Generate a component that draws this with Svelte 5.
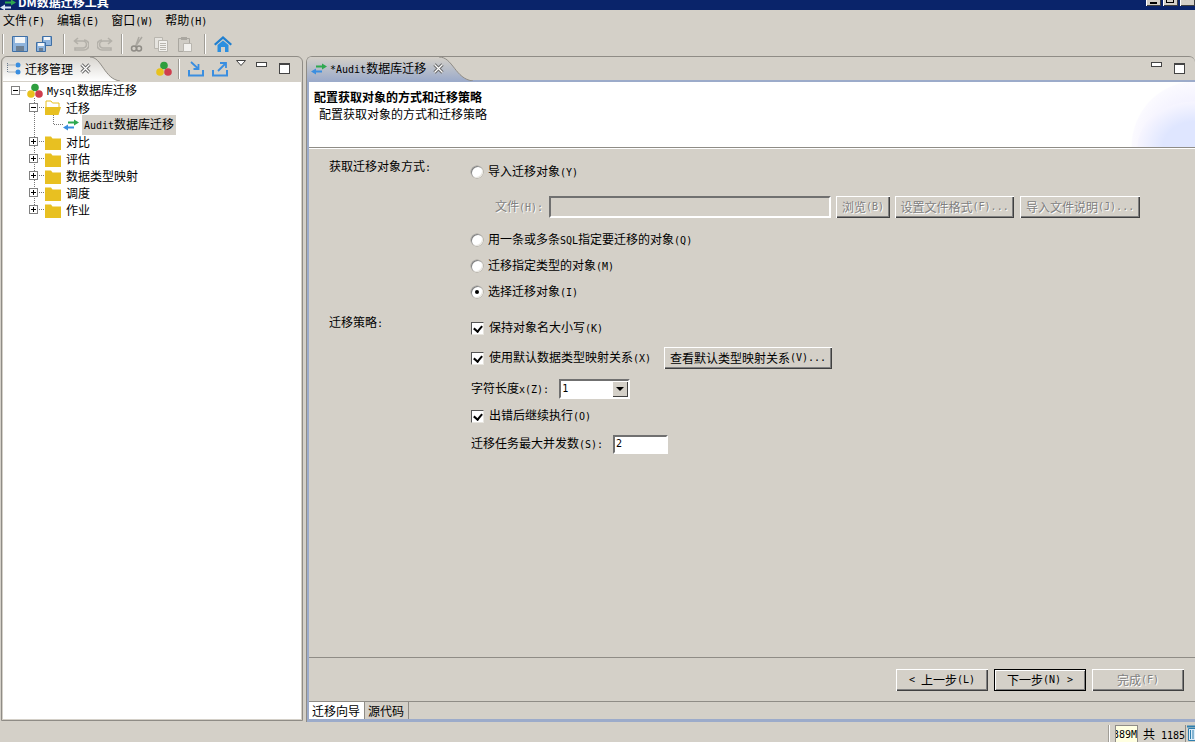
<script>
  const folders = ['对比', '评估', '数据类型映射', '调度', '作业'];
</script>

{#snippet tri()}
  <svg class="ic" width="16" height="16" viewBox="0 0 16 16"><circle cx="8" cy="4.5" r="3.8" fill="#2e9e3e"/><circle cx="4" cy="11" r="3.8" fill="#e8c21e"/><circle cx="12" cy="11" r="3.8" fill="#cf3d4d"/></svg>
{/snippet}
{#snippet arrows()}
  <svg class="ic" width="16" height="16" viewBox="0 0 16 16"><path d="M5 4.500h6V2.500l5 3-5 3V6.500H5z" fill="#2fa84f"/><path d="M11 9.500H5V7.500l-5 3 5 3v-2h6z" fill="#3a8ee0"/></svg>
{/snippet}
{#snippet folder()}
  <svg class="ic" width="16" height="16" viewBox="0 0 16 16"><path d="M0 2.500h6l1.500 2H16V16H0z" fill="#e8c021"/></svg>
{/snippet}
{#snippet folderOpen()}
  <svg class="ic" width="16" height="16" viewBox="0 0 16 16"><path d="M1 1h5l1.500 2H14v5H1z" fill="#fff" stroke="#e8c021"/><path d="M0 7h16l-2.500 8H0z" fill="#e8c021"/></svg>
{/snippet}
{#snippet paneControls()}
  <svg class="pc-min" width="11" height="6" viewBox="0 0 11 6"><rect x=".5" y=".5" width="10" height="4" fill="#fff" stroke="#444"/></svg>
  <svg class="pc-max" width="11" height="11" viewBox="0 0 11 11"><rect x=".5" y=".5" width="10" height="10" fill="#fff" stroke="#444"/><rect x="0" y="0" width="11" height="2" fill="#444"/></svg>
{/snippet}
{#snippet close()}
  <svg class="x" width="11" height="11" viewBox="0 0 11 11"><path d="M1.500 1.500l8 8M9.500 1.500l-8 8" stroke="#6a6a6a" stroke-width="3.200" fill="none"/><path d="M1.500 1.500l8 8M9.500 1.500l-8 8" stroke="#fff" stroke-width="1.200" fill="none"/></svg>
{/snippet}

<div class="app">
  <header class="title">
    <svg class="title-ic" width="16" height="16" viewBox="0 0 16 16"><path d="M5 4.500h6V2.500l5 3-5 3V6.500H5z" fill="#2fa84f"/><path d="M11 9.500H5V7.500l-5 3 5 3v-2h6z" fill="#d9e4f5"/></svg>
    <span class="title-text">DM数据迁移工具</span>
    <div class="win">
      <span class="wb"><b class="wmin"></b></span><span class="wb"><b class="wmax"></b></span><span class="wb wx">✕</span>
    </div>
  </header>

  <nav class="menu">
    <span>文件<i>(F)</i></span><span>编辑<i>(E)</i></span><span>窗口<i>(W)</i></span><span>帮助<i>(H)</i></span>
  </nav>

  <div class="toolbar">
    <span class="sep first"></span>
    <svg width="16" height="16" viewBox="0 0 16 16"><path d="M.5.500h15v15H.5z" fill="#8fb4dd" stroke="#3f6fa5"/><rect x="3" y="1" width="10" height="6" fill="#f4f6f8"/><rect x="4" y="10" width="8" height="5" fill="#6d7f92"/></svg>
    <svg width="16" height="16" viewBox="0 0 16 16"><path d="M6.500.500h9v9h-9z" fill="#8fb4dd" stroke="#3f6fa5"/><rect x="8" y="1" width="6" height="3" fill="#f4f6f8"/><path d="M.5 6.500h9v9h-9z" fill="#8fb4dd" stroke="#3f6fa5"/><rect x="2" y="7" width="6" height="3" fill="#f4f6f8"/><rect x="3" y="12" width="4" height="3" fill="#6d7f92"/></svg>
    <span class="sep sl"></span>
    <svg width="16" height="16" viewBox="0 0 16 16"><path d="M5 2 1.500 5 5 8M2 5h8a3.500 3.500 0 0 1 0 7H2v2h9a5 5 0 0 0 0-10" fill="none" stroke="#b3b0a9" stroke-width="1.600"/></svg>
    <svg width="16" height="16" viewBox="0 0 16 16"><path d="M11 2l3.500 3L11 8M14 5H6a3.500 3.500 0 0 0 0 7h8v2H5a5 5 0 0 1 0-10" fill="none" stroke="#b3b0a9" stroke-width="1.600"/></svg>
    <span class="sep sr"></span>
    <svg width="16" height="16" viewBox="0 0 16 16"><path d="M10 1 7 9M13 1 6 11" stroke="#aaa7a0" stroke-width="1.500" fill="none"/><circle cx="5" cy="12.500" r="2.500" fill="none" stroke="#8f8c86" stroke-width="1.500"/><circle cx="10" cy="12.500" r="2.500" fill="none" stroke="#8f8c86" stroke-width="1.500"/></svg>
    <svg width="16" height="16" viewBox="0 0 16 16"><path d="M1.500 1.500h8v11h-8z" fill="#e6e4df" stroke="#b9b6af"/><path d="M5.500 4.500h9v11h-9z" fill="#f2f1ee" stroke="#b9b6af"/><path d="M7 7.500h6M7 9.500h6M7 11.500h6M7 13.500h6" stroke="#b9b6af"/></svg>
    <svg width="16" height="16" viewBox="0 0 16 16"><path d="M1.500 2.500h11v13h-11z" fill="#cfccc5" stroke="#aaa7a0"/><rect x="4" y="1" width="6" height="3" fill="#aaa7a0"/><path d="M6.500 7.500h8v8h-8z" fill="#f2f1ee" stroke="#b9b6af"/></svg>
    <span class="sep sl"></span>
    <svg class="home" width="18" height="16" viewBox="0 0 18 16"><path d="M9 0 0 8l1.500 1.500L9 3l7.500 6.500L18 8z" fill="#1f7fd0"/><path d="M3.500 9 9 4.500 14.500 9v7H11v-5H7v5H3.500z" fill="#2b8fe0"/></svg>
  </div>

  <main class="main">
    <section class="pane left">
      <div class="tabbar">
        <svg class="tabshape" width="120" height="25" viewBox="0 0 120 25"><defs><linearGradient id="lt" x1="0" x2="0" y1="0" y2="1"><stop offset="0" stop-color="#d8d5cf"/><stop offset="1" stop-color="#fff"/></linearGradient></defs><path d="M1 25V6Q1 1 6 1H88C100 1 102 23 118 25Z" fill="url(#lt)"/><path d="M88 1C100 1 102 23 118 25" fill="none" stroke="#8f8c86"/></svg>
        <div class="tab">
          <svg width="14" height="14" viewBox="0 0 14 14"><path d="M.5 1v9h8M.5 3h8" fill="none" stroke="#6b7b8c" stroke-dasharray="1 1"/><circle cx="11" cy="3" r="2.500" fill="#3a8ee0"/><circle cx="11" cy="10" r="2.500" fill="#3a8ee0"/></svg>
          <span class="tab-label">迁移管理</span>
          {@render close()}
        </div>
        <div class="actions">
          {@render tri()}
          <span class="vsep"></span>
          <svg width="16" height="16" viewBox="0 0 16 16"><path d="M1 9v5.500h14V9" fill="none" stroke="#3a8ee0" stroke-width="2"/><path d="M3 1l7 6.500M10.500 3v5h-5" fill="none" stroke="#3a8ee0" stroke-width="1.800"/></svg>
          <svg width="16" height="16" viewBox="0 0 16 16"><path d="M1 9v5.500h14V9" fill="none" stroke="#3a8ee0" stroke-width="2"/><path d="M6 10l7-7M8 2h6v5" fill="none" stroke="#3a8ee0" stroke-width="1.800"/></svg>
          <svg class="menu-tri" width="10" height="6" viewBox="0 0 10 6"><path d="M.5.500h9L5 5.500z" fill="#fff" stroke="#444"/></svg>
          {@render paneControls()}
        </div>
      </div>
      <div class="tree">
        <svg class="lines" width="100" height="140" viewBox="0 0 100 140"><path d="M17.500 8.500h6M31.500 16v111M36 25.500h6M50.500 31v11.500h10M36 59.500h6M36 76.500h6M36 93.500h6M36 110.500h6M36 127.500h6" fill="none" stroke="#777" stroke-dasharray="1 1"/></svg>
        <div class="row l0"><span class="exp minus"></span>{@render tri()}<span class="txt"><em>Mysql</em>数据库迁移</span></div>
        <div class="row l1"><span class="exp minus"></span>{@render folderOpen()}<span class="txt">迁移</span></div>
        <div class="row l2">{@render arrows()}<span class="txt sel"><em>Audit</em>数据库迁移</span></div>
        {#each folders as f}
          <div class="row l1"><span class="exp plus"></span>{@render folder()}<span class="txt">{f}</span></div>
        {/each}
      </div>
    </section>

    <section class="pane right">
      <div class="tabbar">
        <svg class="tabshape" width="170" height="25" viewBox="0 0 170 25"><defs><linearGradient id="rt" x1="0" x2="0" y1="0" y2="1"><stop offset="0" stop-color="#d4d0c8"/><stop offset="1" stop-color="#9cabca"/></linearGradient></defs><path d="M0 25V6Q0 1 5 1H132C146 1 148 23 166 25Z" fill="url(#rt)"/><path d="M132 1C146 1 148 23 166 25" fill="none" stroke="#8f8c86"/></svg>
        <div class="tab">
          {@render arrows()}
          <span class="tab-label ed"><em>*Audit</em>数据库迁移</span>
          {@render close()}
        </div>
        <div class="actions">{@render paneControls()}</div>
      </div>
      <div class="body">
        <div class="banner">
          <div class="banner-title">配置获取对象的方式和迁移策略</div>
          <div class="banner-sub">配置获取对象的方式和迁移策略</div>
        </div>

        <form class="form">
          <div class="section">
            <div class="sec-label">获取迁移对象方式<i>:</i></div>
            <div class="opts">
              <div class="opt"><span class="radio"></span><span>导入迁移对象<i>(Y)</i></span></div>
              <div class="opt file">
                <span class="dis">文件<i>(H):</i></span>
                <span class="input fileinput"></span>
                <span class="btn dis b1">浏览<i>(B)</i></span>
                <span class="btn dis b2">设置文件格式<i>(F)...</i></span>
                <span class="btn dis b3">导入文件说明<i>(J)...</i></span>
              </div>
              <div class="opt m7"><span class="radio"></span><span>用一条或多条<i>SQL</i>指定要迁移的对象<i>(Q)</i></span></div>
              <div class="opt"><span class="radio"></span><span>迁移指定类型的对象<i>(M)</i></span></div>
              <div class="opt"><span class="radio on"></span><span>选择迁移对象<i>(I)</i></span></div>
            </div>
          </div>
          <div class="section s2">
            <div class="sec-label">迁移策略<i>:</i></div>
            <div class="opts">
              <div class="opt"><span class="check"></span><span>保持对象名大小写<i>(K)</i></span></div>
              <div class="opt m4"><span class="check"></span><span>使用默认数据类型映射关系<i>(X)</i></span><span class="btn view">查看默认类型映射关系<i>(V)...</i></span></div>
              <div class="opt m5"><span>字符长度<i>x(Z):</i></span><span class="input combo"><span class="val">1</span><span class="drop"></span></span></div>
              <div class="opt m1"><span class="check"></span><span>出错后继续执行<i>(O)</i></span></div>
              <div class="opt m2"><span>迁移任务最大并发数<i>(S):</i></span><span class="input num"><span class="val">2</span></span></div>
            </div>
          </div>
        </form>

        <div class="wizard">
          <span class="btn nav"><i class="lt">&lt;</i>上一步<i>(L)</i></span>
          <span class="btn nav def">下一步<i>(N)</i><i class="gt">&gt;</i></span>
          <span class="btn nav dis">完成<i>(F)</i></span>
        </div>
        <div class="subtabs">
          <span class="st active">迁移向导</span><span class="st">源代码</span>
        </div>
      </div>
    </section>
  </main>

  <footer class="status">
    <span class="st-sep"></span>
    <span class="mem"><span>389M</span></span>
    <span class="total">共<i>&nbsp;1185M</i></span>
    <svg class="trash" width="10" height="16" viewBox="0 0 10 16"><path d="M1.500 3.500h8v12h-8z" fill="#dcecf7" stroke="#2f7fae"/><path d="M3.500 5v9M6 5v9" stroke="#2f7fae"/><path d="M0 1.500h10" stroke="#2f7fae" stroke-width="2"/></svg>
  </footer>
</div>

<style>
  :global(body) { margin: 0; background: #d4d0c8; }
  .app {
    width: 1195px; height: 742px; overflow: hidden; background: #d4d0c8; color: #000;
    display: flex; flex-direction: column;
    font: 12px/14px "Noto Sans CJK SC", sans-serif;
  }
  i, em { font: 10px/14px "DejaVu Sans Mono", monospace; font-style: normal; }
  .ic { flex: none; }

  .title { height: 10px; flex: none; background: #0a246a; position: relative; overflow: hidden; color: #fff; font-weight: 700; }
  .title-ic { position: absolute; left: 0; top: -3px; }
  .title-text { position: absolute; left: 18px; top: -5px; font-size: 12px; }
  .win { position: absolute; right: 0; top: -10px; display: flex; gap: 2px; }
  .wb { width: 15px; height: 16px; background: #d4d0c8; box-shadow: inset 1px 1px #fff, inset -1px -1px #404040; position: relative; font: 10px/16px "DejaVu Sans", sans-serif; color: #000; text-align: center; }
  .wmin { position: absolute; left: 4px; top: 12px; width: 7px; height: 2px; background: #000; }
  .wmax { position: absolute; left: 3px; top: 3px; width: 8px; height: 10px; border: 1px solid #000; box-sizing: border-box; }

  .menu { height: 21px; flex: none; display: flex; align-items: center; gap: 12px; padding-left: 3px; }

  .toolbar { height: 25px; flex: none; display: flex; align-items: center; gap: 8px; padding-left: 2px; }
  .sep { width: 1px; height: 20px; background: #a09d96; border-right: 1px solid #fff; }
  .sep.sl { margin-left: 3px; }
  .sep.sr { margin-right: -2px; }

  .main { height: 666px; flex: none; display: flex; padding-left: 1px; }
  .pane { box-sizing: border-box; border: 1px solid #8f8c86; border-radius: 6px 6px 0 0; display: flex; flex-direction: column; }
  .pane.left { width: 302px; height: 665px; }
  .pane.right { width: 889px; margin-left: 3px; border-bottom: 0; border-right: 0; }

  .tabbar { height: 23px; flex: none; position: relative; display: flex; align-items: center; justify-content: space-between; }
  .tabshape { position: absolute; left: 0; top: -1px; }
  .tab { position: relative; display: flex; align-items: center; height: 23px; }
  .left .tab { padding-left: 5px; }
  .right .tab { padding-left: 4px; }
  .tab-label { margin-left: 4px; }
  .tab-label.ed { margin-left: 3px; }
  .x { margin-left: 7px; flex: none; }
  .actions { position: relative; display: flex; align-items: center; height: 23px; padding-right: 10px; }
  .left .actions { padding-right: 12px; }
  .left .actions > svg:nth-of-type(1) { margin-right: 6px; }
  .vsep { width: 1px; height: 20px; background: #a09d96; border-right: 1px solid #fff; margin-right: 8px; }
  .left .actions > svg:nth-of-type(2) { margin-right: 8px; }
  .menu-tri { margin: -12px 0 0 8px; }
  .pc-min { margin: -8px 0 0 10px; }
  .pc-max { margin-left: 12px; }
  .right .pc-min { margin-left: 0; }

  .tree { flex: 1; position: relative; background: #fff; margin: 2px 1px 1px 1px; overflow: hidden; }
  .lines { position: absolute; left: 0; top: 0; }
  .row { position: relative; height: 17px; display: flex; align-items: center; white-space: nowrap; }
  .l0 { padding-left: 8px; }
  .l1 { padding-left: 26px; }
  .l2 { padding-left: 60px; }
  .exp { width: 9px; height: 9px; box-sizing: border-box; border: 1px solid #808080; background: #fff; margin-right: 7px; position: relative; flex: none; }
  .exp::before { content: ""; position: absolute; left: 1px; top: 3px; width: 5px; height: 1px; background: #000; }
  .plus::after { content: ""; position: absolute; left: 3px; top: 1px; width: 1px; height: 5px; background: #000; }
  .txt { margin-left: 5px; }
  .l0 .txt { margin-left: 4px; }
  .sel { background: #d4d0c8; padding: 2px; margin-left: 3px !important; }

  .body { flex: 1; min-height: 0; display: flex; flex-direction: column; border-top: 2px solid #9cabca; border-left: 2px solid #9cabca; border-bottom: 3px solid #9cabca; }
  .banner {
    height: 66px; flex: none; box-sizing: border-box; padding: 8px 0 0 5px; border-bottom: 1px solid #8f8c86;
    box-shadow: 0 1px #fff;
    background:
      radial-gradient(ellipse 58px 46px at 100% 100%, #dfe6ff 55%, #f6f5ff 98%, transparent 100%),
      radial-gradient(ellipse 64px 66px at 100% 100%, #f4f3ff 70%, #fbfaff 98%, transparent 100%),
      #fff;
  }
  .banner-title { font-weight: 700; height: 17px; }
  .banner-sub { padding-left: 5px; }

  .form { flex: 1; padding: 11px 0 0 20px; border-bottom: 1px solid #8f8c86; }
  .section { display: grid; grid-template-columns: 142px 1fr; }
  .s2 { margin-top: 10px; }
  .opts { display: flex; flex-direction: column; }
  .opt { height: 26px; display: flex; align-items: center; white-space: nowrap; }
  .file { margin-top: 9px; padding-left: 24px; }
  .m7 { margin-top: 7px; }
  .m4 { margin-top: 4px; }
  .m5 { margin-top: 5px; }
  .m1 { margin-top: 1px; }
  .m2 { margin-top: 2px; }

  .radio { width: 12px; height: 12px; border-radius: 50%; background: #fff; box-sizing: border-box; box-shadow: inset 1px 1px #808080, inset -1px -1px #e8e6e0, 0 0 0 .5px #a09d96; margin-right: 5px; position: relative; flex: none; }
  .radio.on::after { content: ""; position: absolute; left: 4px; top: 4px; width: 4px; height: 4px; border-radius: 50%; background: #000; }
  .check { width: 13px; height: 13px; box-sizing: border-box; background: #fff; border: 1px solid; border-color: #555 #e8e6e0 #e8e6e0 #555; margin-right: 5px; position: relative; flex: none; }
  .check::after { content: ""; position: absolute; left: 3px; top: 1px; width: 4px; height: 6px; border: solid #000; border-width: 0 2px 2px 0; transform: rotate(40deg); }

  .dis { color: #808080; text-shadow: 1px 1px 0 #fff; }
  .input { box-sizing: border-box; display: flex; align-items: center; background: #fff; border: 2px solid; border-color: #707070 #fff #fff #707070; }
  .fileinput { width: 282px; height: 22px; margin-left: 6px; background: #d4d0c8; }
  .btn { box-sizing: border-box; height: 22px; display: flex; align-items: center; justify-content: center; background: #d4d0c8; flex: none; box-shadow: inset 1px 1px #fff, inset -1px -1px #404040, inset -2px -2px #808080; }
  .b1 { width: 54px; margin-left: 5px; }
  .b2 { width: 119px; margin-left: 5px; }
  .b3 { width: 120px; margin-left: 6px; }
  .view { width: 168px; margin-left: 13px; }
  .combo { width: 71px; height: 20px; margin-left: 10px; justify-content: space-between; }
  .num { width: 55px; height: 19px; margin-left: 10px; }
  .val { padding-left: 1px; font: 10px/14px "DejaVu Sans Mono", monospace; }
  .drop { width: 16px; height: 16px; background: #d4d0c8; box-shadow: inset 1px 1px #fff, inset -1px -1px #404040; position: relative; }
  .drop::after { content: ""; position: absolute; left: 4px; top: 6px; border: 4px solid transparent; border-top-color: #000; border-bottom: 0; }

  .wizard { height: 44px; flex: none; box-sizing: border-box; display: flex; justify-content: flex-end; align-items: center; gap: 6px; padding: 0 11px 0 0; border-bottom: 1px solid #8f8c86; }
  .nav { width: 92px; }
  .def { box-shadow: 0 0 0 1px #000 inset, inset 2px 2px #fff, inset -2px -2px #808080; }
  .lt { margin-right: 6px; }
  .gt { margin-left: 6px; }

  .subtabs { height: 17px; flex: none; display: flex; }
  .st { padding: 0 3px; line-height: 17px; border-right: 1px solid #8f8c86; }
  .st.active { background: #fff; width: 49px; }
  .st:not(.active) { width: 37px; }

  .status { height: 20px; flex: none; display: flex; align-items: flex-start; justify-content: flex-end; box-sizing: border-box; padding-top: 3px; width: 1197px; }
  .st-sep { width: 1px; height: 17px; background: #a09d96; border-right: 1px solid #fff; margin-right: 5px; }
  .mem { width: 23px; height: 17px; box-sizing: border-box; overflow: hidden; background: #ffffe1; border: solid #8f8c86; border-width: 1px 1px 0 1px; display: flex; justify-content: flex-end; font: 10px/17px "DejaVu Sans Mono", monospace; }
  .total { width: 48px; height: 17px; overflow: hidden; white-space: nowrap; padding-left: 5px; box-sizing: border-box; line-height: 17px; border-right: 1px solid #8f8c86; }
  .total i { line-height: 17px; }
  .trash { margin-left: 1px; }
</style>
